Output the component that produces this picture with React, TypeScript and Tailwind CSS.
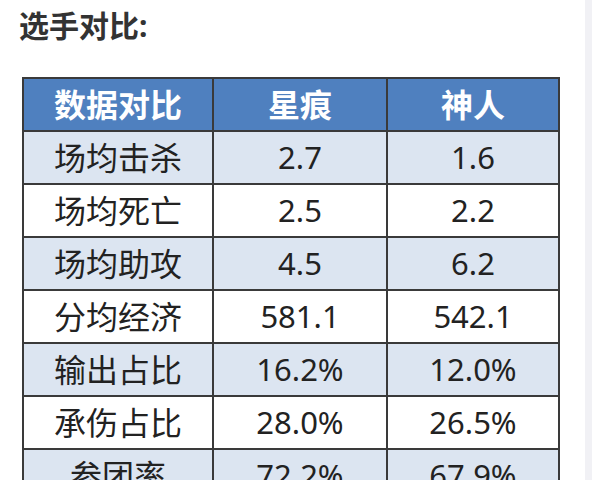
import React from "react";

const rows: [string, string, string][] = [
  ["场均击杀", "2.7", "1.6"],
  ["场均死亡", "2.5", "2.2"],
  ["场均助攻", "4.5", "6.2"],
  ["分均经济", "581.1", "542.1"],
  ["输出占比", "16.2%", "12.0%"],
  ["承伤占比", "28.0%", "26.5%"],
  ["参团率", "72.2%", "67.9%"],
];

export default function App() {
  return (
    <div
      className="flex h-[480px] w-[592px] overflow-hidden bg-white"
      style={{ fontFamily: '"Noto Sans", "Noto Sans CJK SC", sans-serif' }}
    >
      <div className="flex-1">
        <div className="pl-[19px] pt-[8px] text-[30px] font-bold leading-[36px] text-[#333333]">
          选手对比:
        </div>
        <table className="ml-[22px] mt-[33px] border-collapse border-2 border-[#3a3a3a] leading-none">
          <thead>
            <tr className="bg-[#4f80bf] text-white">
              <th className="h-[53px] w-[190px] border-2 border-[#3a3a3a] p-0 text-center text-[32px] font-bold">数据对比</th>
              <th className="h-[53px] w-[174px] border-2 border-[#3a3a3a] p-0 text-center text-[32px] font-bold">星痕</th>
              <th className="h-[53px] w-[172px] border-2 border-[#3a3a3a] p-0 text-center text-[32px] font-bold">神人</th>
            </tr>
          </thead>
          <tbody>
            {rows.map((r, i) => (
              <tr key={i} className={i % 2 === 0 ? "bg-[#dce5f1] text-[#222222]" : "bg-white text-[#222222]"}>
                {r.map((c, j) => (
                  <td
                    key={j}
                    className={
                      j === 0
                        ? "h-[53px] border-2 border-[#3a3a3a] p-0 text-center text-[32px] font-normal"
                        : "h-[53px] border-2 border-[#3a3a3a] p-0 text-center text-[31px] font-normal"
                    }
                  >
                    {c}
                  </td>
                ))}
              </tr>
            ))}
          </tbody>
        </table>
      </div>
      <div className="w-[7px] bg-[#f1f1f5]" />
    </div>
  );
}
